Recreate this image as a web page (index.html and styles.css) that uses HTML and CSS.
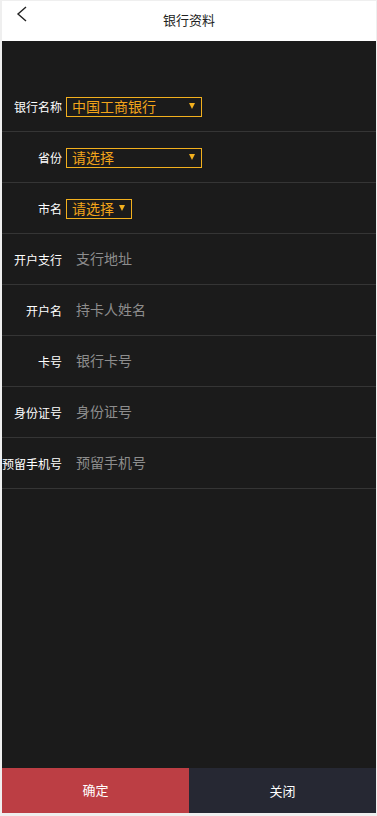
FILE: index.html
```html
<!DOCTYPE html>
<html lang="zh-CN">
<head>
  <meta charset="UTF-8">
  <title>银行资料</title>
  <meta name="viewport" content="width=device-width, initial-scale=1">
  <link rel="stylesheet" href="styles.css">
</head>
<body>
  <div class="page">
    <div class="header">
      <a class="back" href="#">
        <svg width="12" height="16" viewBox="0 0 12 16"><path d="M10 1 L2 8 L10 15" fill="none" stroke="#222" stroke-width="1.4"/></svg>
      </a>
      <h1>银行资料</h1>
    </div>

    <div class="main">
      <div class="row">
        <label>银行名称</label>
        <div class="select wide"><span>中国工商银行</span><i class="arrow"></i></div>
      </div>
      <div class="row">
        <label>省份</label>
        <div class="select wide"><span>请选择</span><i class="arrow"></i></div>
      </div>
      <div class="row">
        <label>市名</label>
        <div class="select"><span>请选择</span><i class="arrow"></i></div>
      </div>
      <div class="row">
        <label>开户支行</label>
        <input type="text" placeholder="支行地址">
      </div>
      <div class="row">
        <label>开户名</label>
        <input type="text" placeholder="持卡人姓名">
      </div>
      <div class="row">
        <label>卡号</label>
        <input type="text" placeholder="银行卡号">
      </div>
      <div class="row">
        <label>身份证号</label>
        <input type="text" placeholder="身份证号">
      </div>
      <div class="row">
        <label>预留手机号</label>
        <input type="text" placeholder="预留手机号">
      </div>
    </div>

    <div class="footer">
      <button class="ok">确定</button>
      <button class="close">关闭</button>
    </div>
  </div>
</body>
</html>
```

FILE: styles.css
```css
* { box-sizing: border-box; margin: 0; padding: 0; }
body {
  font-family: "Liberation Sans", "Noto Sans CJK SC", sans-serif;
  background: #efefef;
  padding: 1px 1px 3px 2px;
}
.page {
  height: 812px;
  display: flex;
  flex-direction: column;
  background: #1b1b1b;
}
.header {
  height: 40px;
  background: #fff;
  display: flex;
  align-items: center;
  justify-content: center;
  position: relative;
}
.header h1 {
  font-size: 13px;
  font-weight: normal;
  color: #222;
  padding-bottom: 3px;
}
.back {
  position: absolute;
  left: 14px;
  top: 5px;
}
.main {
  flex: 1;
  padding-top: 40px;
}
.row {
  height: 51px;
  border-bottom: 1px solid #353535;
  display: flex;
  align-items: center;
}
.row label {
  width: 60px;
  text-align: right;
  font-size: 12px;
  color: #fff;
  white-space: nowrap;
  margin-right: 4px;
}
.select {
  position: relative;
  height: 20px;
  width: 66px;
  border: 1px solid #f2b01e;
  color: #f2a41a;
  font-size: 14px;
  line-height: 18px;
  padding-left: 5px;
  margin-top: 1px;
}
.select.wide { width: 136px; }
.select .arrow {
  position: absolute;
  right: 6px;
  top: 5px;
  width: 0;
  height: 0;
  border-left: 3px solid transparent;
  border-right: 3px solid transparent;
  border-top: 6px solid #f2b01e;
}
.row input {
  flex: 1;
  background: transparent;
  border: none;
  outline: none;
  color: #ddd;
  font-family: inherit;
  font-size: 14px;
  padding-left: 10px;
}
.row input::placeholder { color: #8d8d8d; }
.footer {
  height: 45px;
  display: flex;
}
.footer button {
  flex: 1;
  border: none;
  color: #fff;
  font-family: inherit;
  font-size: 13px;
}
.footer .ok { background: #bc3e44; padding-bottom: 3px; }
.footer .close { background: #262833; }
```
